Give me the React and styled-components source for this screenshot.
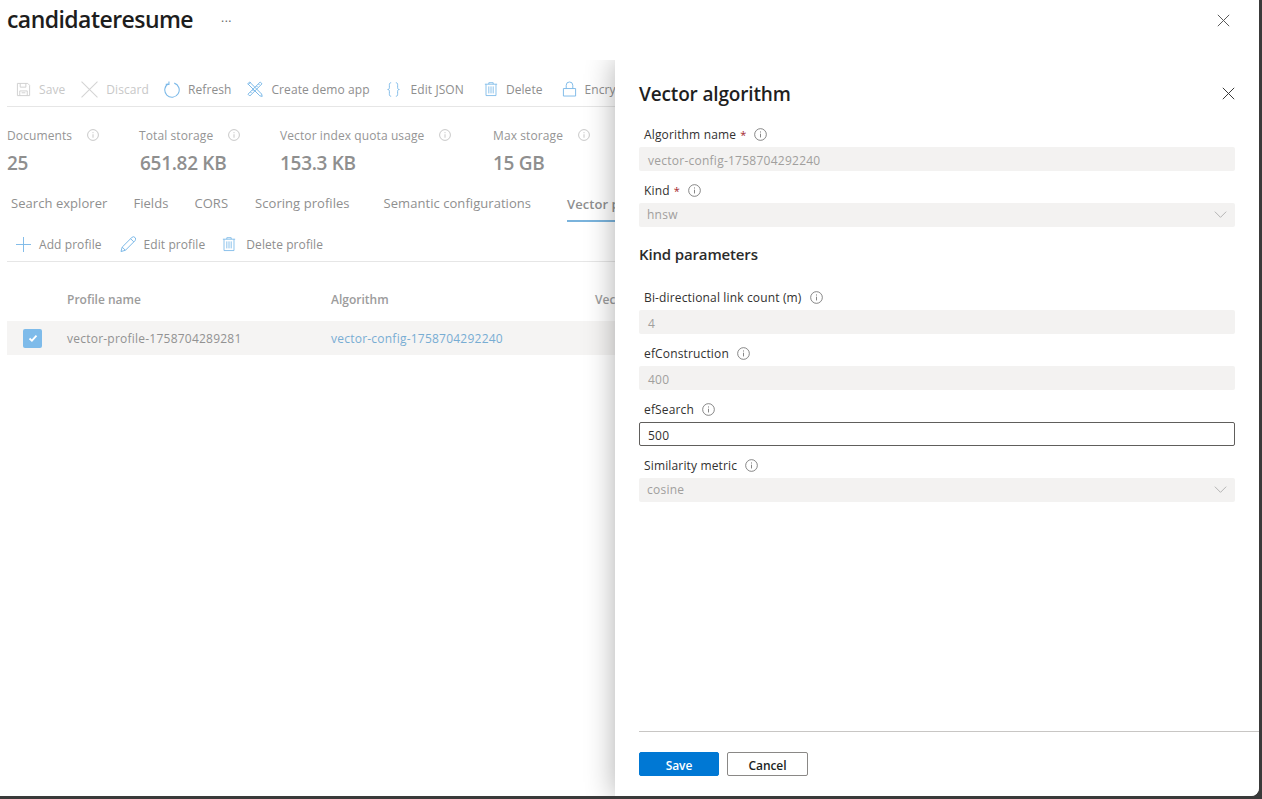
import React from 'react'
import styled, { createGlobalStyle } from 'styled-components'

const GlobalStyle = createGlobalStyle`
  html, body { margin: 0; padding: 0; background: #3a3a3a; }
  * { box-sizing: border-box; }
`

const blue = '#7cb9e8'

const Svg = ({ size = 16, w, h, children, stroke = blue, sw = 1 }) => (
  <svg width={w || size} height={h || size} viewBox="0 0 16 16" fill="none" stroke={stroke} strokeWidth={sw} style={{ flex: 'none' }}>
    {children}
  </svg>
)

const SaveIcon = () => (
  <Svg w={15} h={15} stroke="#cfcfcf">
    <path d="M1.5 1.5h11l2 2v11h-13z" />
    <path d="M4.5 1.5v4h6v-4M4 14.5v-5h8v5M6 11.5h4" />
  </Svg>
)
const DiscardIcon = () => (
  <Svg w={17} h={17} stroke="#d4d4d4"><path d="M.5.5l15 15M15.5.5l-15 15" /></Svg>
)
const RefreshIcon = () => (
  <Svg w={17} h={17}>
    <path d="M5 2.6A6.8 6.8 0 1 0 10.6 2" />
    <path d="M5.6 0.4v2.8H2.6" />
  </Svg>
)
const DemoIcon = () => (
  <Svg>
    <path d="M2.6 1l12 12 .6 2.4-2.4-.6-12-12zM1 3.8L3.8 1" />
    <path d="M13.2 1l1.8 1.8L2.8 15 1 13.2zM11.5 3l1 1M9.5 5l1 1M5.5 9l1 1M3.5 11l1 1" />
  </Svg>
)
const BracesIcon = () => (
  <Svg w={15} h={17}>
    <path d="M5.5 .8C3.5 .8 3.6 2 3.6 3.5v2.6c0 1.2-.6 1.9-1.8 1.9 1.2 0 1.8.7 1.8 1.9v2.6c0 1.5-.1 2.7 1.9 2.7" />
    <path d="M10.5 .8c2 0 1.9 1.2 1.9 2.7v2.6c0 1.2.6 1.9 1.8 1.9-1.2 0-1.8.7-1.8 1.9v2.6c0 1.5.1 2.7-1.9 2.7" />
  </Svg>
)
const TrashIcon = () => (
  <Svg w={14} h={18}>
    <path d="M1 2.5h14M5.5 2.5V.8h5v1.7M2.3 2.5v13h11.4v-13M5.5 5v8M8 5v8M10.5 5v8" />
  </Svg>
)
const LockIcon = () => (
  <Svg w={15} h={18}>
    <path d="M1.5 7.5h13v8h-13zM4.5 7.5V4a3.5 3.5 0 0 1 7 0v3.5" />
  </Svg>
)
const PlusIcon = () => (
  <Svg w={15} h={15}><path d="M8 0v16M0 8h16" /></Svg>
)
const PencilIcon = () => (
  <Svg w={16} h={17}>
    <path d="M1 15l1.2-4.4L11.8 1a1.7 1.7 0 0 1 3.2 3.2L5.4 13.8zM2.2 10.6l3.2 3.2M10.6 2.2l3.2 3.2" />
  </Svg>
)
const InfoIcon = ({ size = 13, color = '#6b6b6b' }) => (
  <Svg size={size} stroke={color}>
    <circle cx="8" cy="8" r="7.2" />
    <path d="M8 7v4.6M8 4.2v1.4" />
  </Svg>
)
const Chevron = () => (
  <Svg w={13} h={13} stroke="#a6a6a6"><path d="M1 4.5l7 7 7-7" /></Svg>
)
const CloseIcon = ({ color = '#333' }) => (
  <Svg w={13} h={13} stroke={color} sw={1.2}><path d="M1 1l14 14M15 1L1 15" /></Svg>
)

const Frame = styled.div`
  width: 1262px;
  height: 799px;
  padding: 0 3px 3px 0;
  background: #3a3a3a;
  font-family: "Open Sans", "Noto Sans", sans-serif;
`
const Window = styled.div`
  width: 1259px;
  height: 796px;
  background: #fff;
  border-bottom-right-radius: 8px;
  overflow: hidden;
  display: flex;
  flex-direction: column;
`
const TitleBar = styled.header`
  height: 60px;
  flex: none;
  display: flex;
  align-items: flex-start;
  padding: 6px 29px 0 7px;
`
const Title = styled.h1`
  margin: 0;
  font-size: 23px;
  line-height: 27px;
  font-weight: 600;
  color: #1d1d1d;
  letter-spacing: -0.55px;
`
const More = styled.span`
  margin: 2px auto 0 28px;
  font-size: 12px;
  line-height: 20px;
  letter-spacing: 0.5px;
  color: #666;
`
const CloseButton = styled.span`
  display: flex;
  margin-top: 8px;
`
const Body = styled.div`
  flex: 1;
  position: relative;
  overflow: hidden;
  padding-left: 7px;
`
const Content = styled.div`
  width: 608px;
  overflow: hidden;
`
const Bar = styled.div`
  display: flex;
  align-items: center;
  white-space: nowrap;
  height: ${p => p.$h}px;
  padding: ${p => p.$pad}px 0 0 9px;
  border-bottom: 1px solid #e6e6e6;
`
const Command = styled.span`
  display: flex;
  align-items: center;
  gap: ${p => p.$gap || 8}px;
  margin-right: ${p => p.$mr || 16}px;
  font-size: 12px;
  letter-spacing: 0.08px;
  color: ${p => (p.$off ? '#c8c8c8' : '#8e8e8e')};
`
const Stats = styled.div`
  display: flex;
  margin-top: 19px;
`
const Stat = styled.div`
  width: ${p => p.$w}px;
  flex: none;
`
const StatLabel = styled.div`
  display: flex;
  align-items: center;
  gap: 15px;
  height: 18px;
  font-size: 12px;
  letter-spacing: 0.1px;
  color: #959595;
`
const StatValue = styled.div`
  margin: 6px 0 0 ${p => (p.$nudge ? 1 : 0)}px;
  font-size: 19px;
  line-height: 26px;
  font-weight: 600;
  letter-spacing: -0.3px;
  color: #8f8f8f;
`
const Tabs = styled.div`
  display: flex;
  white-space: nowrap;
  margin-top: 13px;
  padding-left: 4px;
  height: 33px;
`
const Tab = styled.span`
  margin-left: ${p => p.$gap}px;
  height: 33px;
  padding-top: ${p => (p.$active ? 6 : 5)}px;
  font-size: 13px;
  line-height: 18px;
  letter-spacing: 0.05px;
  font-weight: ${p => (p.$active ? 600 : 400)};
  color: #8f8f8f;
  border-bottom: ${p => (p.$active ? `2px solid #7ab3dc` : 'none')};
`
const HeadRow = styled.div`
  display: grid;
  grid-template-columns: 60px 264px 264px 200px;
  align-items: center;
  width: 800px;
  height: 30px;
  margin-top: 22px;
  font-size: 12px;
  font-weight: 600;
  color: #9c9c9c;
  letter-spacing: 0;
`
const Row = styled(HeadRow)`
  height: 34px;
  margin-top: 7px;
  background: #f5f4f3;
  font-weight: 400;
  color: #929292;
  letter-spacing: 0.23px;
`
const Check = styled.span`
  width: 19px;
  height: 19px;
  margin-left: 16px;
  border-radius: 2px;
  background: #7ebbea;
  display: flex;
  align-items: center;
  justify-content: center;
`
const LinkText = styled.span`
  color: #78add3;
`
const Panel = styled.aside`
  position: absolute;
  top: 0;
  bottom: 0;
  right: 0;
  width: 644px;
  padding-left: 24px;
  background: #fff;
  box-shadow: 0 0 28px rgba(0, 0, 0, 0.32);
  display: flex;
  flex-direction: column;
`
const PanelHeader = styled.div`
  display: flex;
  align-items: center;
  justify-content: space-between;
  height: 63px;
  padding: 4px 24px 0 0;
  flex: none;
`
const PanelTitle = styled.h2`
  margin: 0;
  font-size: 19px;
  font-weight: 600;
  letter-spacing: -0.15px;
  color: #1f1f1f;
`
const Form = styled.div`
  width: 596px;
  display: flex;
  flex-direction: column;
`
const SectionTitle = styled.h3`
  margin: 7px 0 20px;
  height: 24px;
  font-size: 15px;
  line-height: 24px;
  font-weight: 600;
  letter-spacing: -0.15px;
  color: #2b2b2b;
`
const Field = styled.div`
  margin-bottom: 8px;
`
const Label = styled.div`
  height: 24px;
  padding: 0 0 2px 5px;
  display: flex;
  align-items: center;
  gap: 8px;
  font-size: 12px;
  letter-spacing: 0.15px;
  color: #323130;
`
const Star = styled.span`
  color: #a4262c;
  font-size: 11px;
  margin-left: -4px;
`
const Input = styled.div`
  height: 24px;
  padding: ${p => (p.$select ? '0 8px 1px' : '2px 8px 0')};
  padding-left: ${p => (p.$plain ? 9 : 8)}px;
  display: flex;
  align-items: center;
  justify-content: space-between;
  font-size: 12px;
  letter-spacing: 0.25px;
  border-radius: 2px;
  background: ${p => (p.$active ? '#fff' : '#f3f2f1')};
  border: ${p => (p.$active ? '1px solid #605e5c' : 'none')};
  color: ${p => (p.$active ? '#323130' : '#a19f9d')};
`
const Footer = styled.footer`
  margin-top: auto;
  height: 65px;
  padding-top: 20px;
  border-top: 1px solid #c8c6c4;
  display: flex;
  align-items: flex-start;
  gap: 8px;
  flex: none;
`
const Button = styled.button`
  width: ${p => p.$w}px;
  height: 24px;
  padding: 2px 0 0;
  border-radius: 2px;
  font-family: inherit;
  font-size: 12px;
  font-weight: 600;
  letter-spacing: -0.1px;
  background: ${p => (p.$primary ? '#0078d4' : '#fff')};
  color: ${p => (p.$primary ? '#fff' : '#201f1e')};
  border: 1px solid ${p => (p.$primary ? '#0078d4' : '#8a8886')};
`

const commands = [
  { icon: <SaveIcon />, text: 'Save', off: true },
  { icon: <DiscardIcon />, text: 'Discard', off: true, mr: 14 },
  { icon: <RefreshIcon />, text: 'Refresh' },
  { icon: <DemoIcon />, text: 'Create demo app' },
  { icon: <BracesIcon />, text: 'Edit JSON', gap: 10, mr: 20 },
  { icon: <TrashIcon />, text: 'Delete', mr: 19 },
  { icon: <LockIcon />, text: 'Encryption' },
]

const stats = [
  { label: 'Documents', value: '25', w: 132 },
  { label: 'Total storage', value: '651.82 KB', w: 141, nudge: true },
  { label: 'Vector index quota usage', value: '153.3 KB', w: 213 },
  { label: 'Max storage', value: '15 GB', w: 120 },
]

const tabs = [
  { text: 'Search explorer', gap: 0 },
  { text: 'Fields', gap: 26 },
  { text: 'CORS', gap: 26 },
  { text: 'Scoring profiles', gap: 27 },
  { text: 'Semantic configurations', gap: 34 },
  { text: 'Vector profiles', gap: 36, active: true },
]

function FormField({ label, value, required, select, active }) {
  return (
    <Field>
      <Label>
        <span>{label}</span>
        {required && <Star>*</Star>}
        <InfoIcon />
      </Label>
      <Input $active={active} $select={select} $plain={!select && !active}>
        {value}
        {select && <Chevron />}
      </Input>
    </Field>
  )
}

export default function App() {
  return (
    <Frame>
      <GlobalStyle />
      <Window>
        <TitleBar>
          <Title>candidateresume</Title>
          <More>...</More>
          <CloseButton><CloseIcon color="#555" /></CloseButton>
        </TitleBar>
        <Body>
          <Content>
            <Bar $h={47} $pad={12}>
              {commands.map(c => (
                <Command key={c.text} $off={c.off} $gap={c.gap} $mr={c.mr}>{c.icon}{c.text}</Command>
              ))}
            </Bar>
            <Stats>
              {stats.map(s => (
                <Stat key={s.label} $w={s.w}>
                  <StatLabel>{s.label}<InfoIcon size={12} color="#b5b5b5" /></StatLabel>
                  <StatValue $nudge={s.nudge}>{s.value}</StatValue>
                </Stat>
              ))}
            </Stats>
            <Tabs>
              {tabs.map(t => (
                <Tab key={t.text} $gap={t.gap} $active={t.active}>{t.text}</Tab>
              ))}
            </Tabs>
            <Bar $h={40} $pad={5}>
              <Command $mr={18}><PlusIcon />Add profile</Command>
              <Command $mr={17}><PencilIcon />Edit profile</Command>
              <Command $gap={10}><TrashIcon />Delete profile</Command>
            </Bar>
            <HeadRow>
              <span />
              <span>Profile name</span>
              <span>Algorithm</span>
              <span>Vector</span>
            </HeadRow>
            <Row>
              <Check>
                <svg width="10" height="10" viewBox="0 0 10 10" fill="none" stroke="#fff" strokeWidth="1.8"><path d="M1.5 5.5l2.4 2.2 4.6-5" /></svg>
              </Check>
              <span>vector-profile-1758704289281</span>
              <LinkText>vector-config-1758704292240</LinkText>
              <span />
            </Row>
          </Content>
          <Panel>
            <PanelHeader>
              <PanelTitle>Vector algorithm</PanelTitle>
              <CloseIcon />
            </PanelHeader>
            <Form>
              <FormField label="Algorithm name" value="vector-config-1758704292240" required />
              <FormField label="Kind" value="hnsw" required select />
              <SectionTitle>Kind parameters</SectionTitle>
              <FormField label="Bi-directional link count (m)" value="4" />
              <FormField label="efConstruction" value="400" />
              <FormField label="efSearch" value="500" active />
              <FormField label="Similarity metric" value="cosine" select />
            </Form>
            <Footer>
              <Button $primary $w={80}>Save</Button>
              <Button $w={81}>Cancel</Button>
            </Footer>
          </Panel>
        </Body>
      </Window>
    </Frame>
  )
}
